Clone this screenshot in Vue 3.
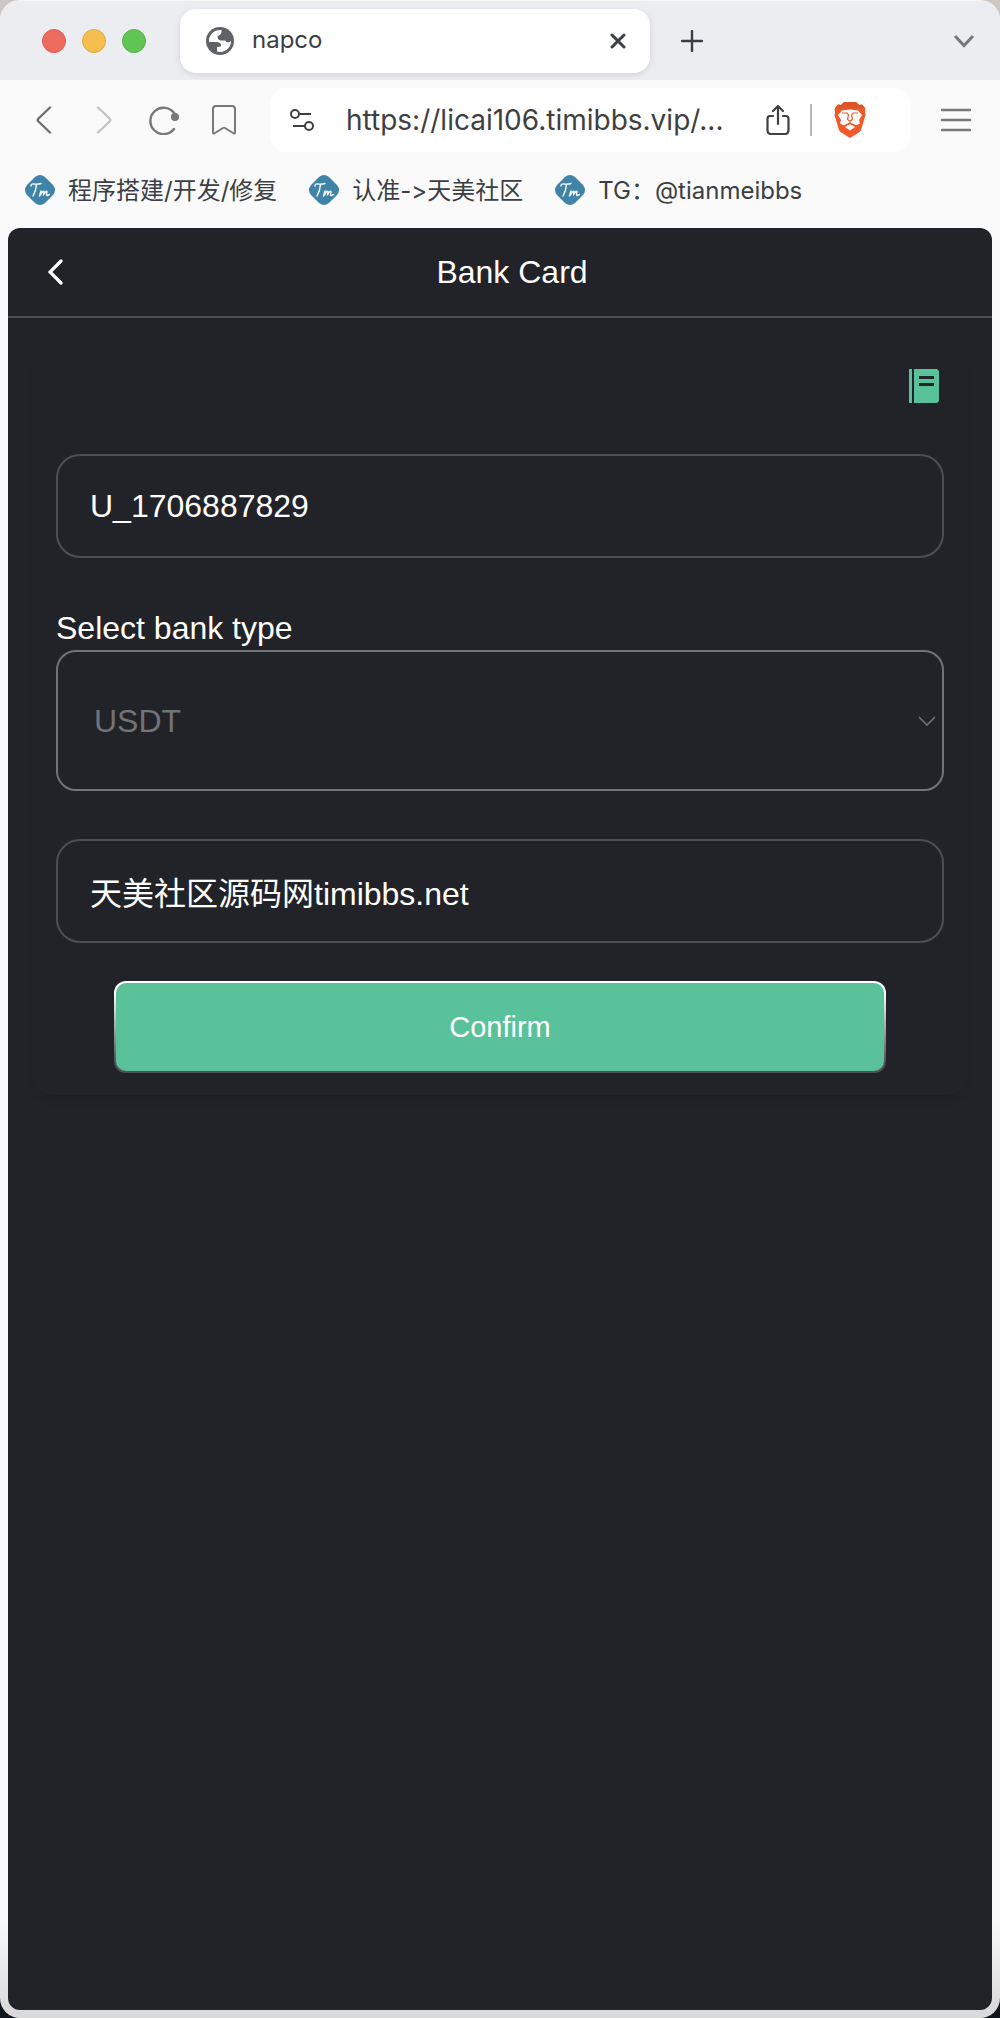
<script setup>
import { ref } from 'vue'

const url = ref('https://licai106.timibbs.vip/...')
const bookmarks = ['程序搭建/开发/修复', '认准->天美社区', 'TG：@tianmeibbs']
const account = ref('U_1706887829')
const bankType = ref('USDT')
const address = ref('天美社区源码网timibbs.net')
</script>

<template>
  <div class="desktop">
    <div class="window">
      <header class="tabstrip">
        <div class="lights">
          <button class="light red" aria-label="Close window"></button>
          <button class="light yellow" aria-label="Minimize window"></button>
          <button class="light green" aria-label="Zoom window"></button>
        </div>
        <div class="tab">
          <svg class="globe" width="28" height="28" viewBox="0 0 28 28">
            <circle cx="14" cy="14" r="14" fill="#5f6368" />
            <path d="M15.500 3A11 11 0 0 0 3 15H10C13 15 15.500 16 15 19.500L11 20V24.600A11 11 0 0 0 25 14C23 16 20 15.500 19 13.500C14 14 11.500 13 11.500 9.500C13 8 16 8 15.500 3Z" fill="#fff" />
          </svg>
          <span class="tab-title">napco</span>
          <button class="icon-btn" aria-label="Close tab">
            <svg width="16" height="16" viewBox="0 0 16 16"><path d="M2 2 14 14M14 2 2 14" stroke="#3b3f43" stroke-width="3" stroke-linecap="round" /></svg>
          </button>
        </div>
        <button class="icon-btn plus" aria-label="New tab">
          <svg width="22" height="22" viewBox="0 0 22 22"><path d="M11 1V21M1 11H21" stroke="#3b3f43" stroke-width="2.4" stroke-linecap="round" /></svg>
        </button>
        <button class="icon-btn more" aria-label="Search tabs">
          <svg width="22" height="14" viewBox="0 0 22 14" fill="none"><path d="M2 2 11 11.500 20 2" stroke="#77777c" stroke-width="3" /></svg>
        </button>
      </header>

      <div class="toolbar">
        <button class="tool" aria-label="Back">
          <svg width="16" height="28" viewBox="0 0 16 28" fill="none"><path d="M14 1.500 2.500 12.500Q1 14 2.500 15.500L14 26.500" stroke="#6e6e73" stroke-width="2.400" stroke-linecap="round" /></svg>
        </button>
        <button class="tool" aria-label="Forward">
          <svg width="16" height="28" viewBox="0 0 16 28" fill="none"><path d="M2 1.500 13.500 12.500Q15 14 13.500 15.500L2 26.500" stroke="#c4c4c7" stroke-width="2.400" stroke-linecap="round" /></svg>
        </button>
        <button class="tool" aria-label="Reload">
          <svg width="30" height="30" viewBox="0 0 30 30" fill="none"><path d="M25.500 8.500A13.200 13.200 0 1 0 25 24" stroke="#77777c" stroke-width="2.400" stroke-linecap="round" /><circle cx="26" cy="12" r="4" fill="#77777c" /></svg>
        </button>
        <button class="tool" aria-label="Bookmark this page">
          <svg width="24" height="30" viewBox="0 0 24 30" fill="none"><path d="M4 1H20Q23 1 23 4V27Q23 29.500 21 28L13 23Q12 22.300 11 23L3 28Q1 29.500 1 27V4Q1 1 4 1Z" stroke="#77777c" stroke-width="2" /></svg>
        </button>
        <div class="address">
          <svg width="24" height="24" viewBox="0 0 24 24" fill="none" stroke="#3f3f42" stroke-width="2"><circle cx="5" cy="6" r="4" /><path d="M9 6H21M3 18H15" /><circle cx="19" cy="18" r="4" /></svg>
          <input v-model="url" class="url" type="text" aria-label="Address" />
          <button class="icon-btn" aria-label="Share">
            <svg width="24" height="32" viewBox="0 0 24 32" fill="none" stroke="#3f3f42" stroke-width="2.200" stroke-linecap="round" stroke-linejoin="round"><path d="M7 12H4Q1.500 12 1.500 15V26Q1.500 30 5 30H19Q22.500 30 22.500 26V15Q22.500 12 20 12H17M12 20V2M7 7 12 2 17 7" /></svg>
          </button>
          <i class="divider"></i>
          <button class="icon-btn" aria-label="Brave Shields">
            <svg width="32" height="36" viewBox="0 0 32 36">
              <path d="M10 0H22L25 3L28 2.500L31.500 7L31 10L31.500 13L27 28Q26 30 24 31L16 36L8 31Q6 30 5 28L.5 13L1 10L.5 7L4 2.500L7 3Z" fill="#f1592a" />
              <path d="M10 0H22L25 3L28 2.500L31 6L25 6.500H7L1 6L4 2.500L7 3Z" fill="#dd5426" />
              <path d="M8 8.500 16 7.500 24 8.500 28 13 25 18 26 21.500 22 23.500 16 20.500 10 23.500 6 21.500 7 18 4 13Z" fill="#fff" />
              <path d="M16 22 21 25 16 28.500 11 25Z" fill="#fff" />
              <path d="M8 11 13 11 14.500 13 13.500 17.500 16 19 18.500 17.500 17.500 13 19 11 24 11M16 19V22M9 24.500 16 21.200 23 24.500" fill="none" stroke="#f1592a" stroke-width="1.200" />
            </svg>
          </button>
        </div>
        <button class="tool menu" aria-label="Menu">
          <svg width="30" height="24" viewBox="0 0 30 24"><path d="M1 2H29M1 12H29M1 22H29" stroke="#77777c" stroke-width="2.400" stroke-linecap="round" /></svg>
        </button>
      </div>

      <nav class="bookmarks" aria-label="Bookmarks">
        <a v-for="name in bookmarks" :key="name" href="#" class="bookmark">
          <svg width="30" height="30" viewBox="0 0 30 30">
            <path d="M10 2Q15-2 20 2L28 10Q32 15 28 20L20 28Q15 32 10 28L2 20Q-2 15 2 10Z" fill="#3f83a9" />
            <path d="M6 11Q6 8.500 9 9Q13 9.500 16 8.500M11.500 9.500Q11 16 8 21M14.500 21 16 16 15.500 20Q18 15 19 16.500L18.500 20Q21 15 22 16.500Q21 20 22 20.500L24.500 19.500" fill="none" stroke="#fff" stroke-width="1.400" stroke-linecap="round" stroke-linejoin="round" />
          </svg>
          <span>{{ name }}</span>
        </a>
      </nav>

      <main class="page">
        <div class="page-head">
          <button class="icon-btn back" aria-label="Go back">
            <svg width="16" height="26" viewBox="0 0 16 26" fill="none"><path d="M13 2 2 13 13 24" stroke="#fff" stroke-width="3.200" stroke-linecap="round" /></svg>
          </button>
          <h1>Bank Card</h1>
        </div>

        <form class="card" @submit.prevent>
          <button type="button" class="icon-btn records" aria-label="Records">
            <svg width="30" height="34" viewBox="0 0 30 34"><path d="M0 0H3V34H0ZM5 0H28L30 2V32L28 34H5Z" fill="#5ac29b" /><path d="M10 7H25V10H10ZM10 14H25V17H10Z" fill="#222328" /></svg>
          </button>
          <input v-model="account" class="field" type="text" aria-label="Account name" />
          <label for="bank-type">Select bank type</label>
          <div class="select-wrap">
            <select id="bank-type" v-model="bankType">
              <option>USDT</option>
            </select>
            <svg class="caret" width="18" height="10" viewBox="0 0 18 10" fill="none"><path d="M1 1 9 9 17 1" stroke="#717377" stroke-width="1.600" /></svg>
          </div>
          <input v-model="address" class="field" type="text" aria-label="Address" />
          <button class="confirm" type="submit">Confirm</button>
        </form>
      </main>
    </div>
  </div>
</template>

<style>
body {
  margin: 0;
}
</style>

<style scoped>
* {
  box-sizing: border-box;
}

button,
input,
select {
  margin: 0;
  padding: 0;
  border: 0;
  background: none;
  font: inherit;
  color: inherit;
}

svg {
  display: block;
  flex: none;
}

.desktop {
  min-height: 100vh;
  display: flex;
  background: linear-gradient(#cfc7c3 50%, #10151b 50%);
  font-family: Inter, "Noto Sans CJK SC", sans-serif;
  font-feature-settings: "calt" 0;
}

.window {
  flex: 1;
  min-width: 0;
  display: flex;
  flex-direction: column;
  padding: 0 8px 8px;
  border-top: 1px solid #f4f4f4;
  border-radius: 20px;
  background: linear-gradient(to top, #dadada 8px, #fafafa 100px);
}

.tabstrip {
  display: flex;
  align-items: center;
  height: 79px;
  margin: 0 -8px;
  padding: 0 25px 0 42px;
  border-radius: 20px 20px 0 0;
  background: #ecedf1;
}

.lights {
  display: flex;
  gap: 16px;
  margin-right: 34px;
}

.light {
  width: 24px;
  height: 24px;
  border-radius: 50%;
}

.red {
  border: 1px solid #dc5b51;
  background: #ed6a5f;
}

.yellow {
  border: 1px solid #dca845;
  background: #f5bf4f;
}

.green {
  border: 1px solid #52ae42;
  background: #61c555;
}

.tab {
  display: flex;
  align-items: center;
  flex: 0 1 470px;
  height: 64px;
  padding: 0 24px 0 26px;
  border-radius: 16px;
  background: #fff;
  box-shadow: 0 2px 6px rgba(0, 0, 0, 0.1);
}

.tab-title {
  flex: 1;
  margin-left: 18px;
  padding-bottom: 2px;
  font-size: 24px;
  color: #3b3f43;
}

.icon-btn {
  display: flex;
  align-items: center;
}

.plus {
  margin-left: 31px;
}

.more {
  margin-left: auto;
}

.toolbar {
  display: flex;
  align-items: center;
  height: 80px;
  padding-left: 6px;
}

.tool {
  display: flex;
  justify-content: center;
  width: 60px;
}

.address {
  display: flex;
  align-items: center;
  flex: 1;
  min-width: 0;
  height: 64px;
  margin-left: 16px;
  padding: 0 44px 0 20px;
  border-radius: 16px;
  background: #fff;
}

.url {
  flex: 1;
  min-width: 0;
  margin-left: 32px;
  font-size: 28px;
  color: #3f3f42;
}

.divider {
  width: 2px;
  height: 32px;
  margin: 0 22px 0 20px;
  background: #b9b9bb;
}

.menu {
  margin: 0 6px 0 16px;
}

.bookmarks {
  display: flex;
  gap: 32px;
  height: 68px;
  padding-left: 17px;
}

.bookmark {
  display: flex;
  align-items: center;
  gap: 13px;
  height: 60px;
  font-size: 24px;
  color: #3b3f43;
  text-decoration: none;
  white-space: nowrap;
}

.bookmark span {
  padding-bottom: 4px;
}

.page {
  flex: 1;
  border-radius: 12px;
  background: #222328;
  color: #fff;
  font-family: "Liberation Sans", "Noto Sans CJK SC", sans-serif;
  font-size: 32px;
}

.page-head {
  display: grid;
  grid-template-columns: 80px 1fr 56px;
  align-items: center;
  height: 90px;
  border-bottom: 2px solid #4e4f53;
}

.back {
  padding-left: 40px;
}

h1 {
  margin: 0;
  font-size: 32px;
  font-weight: 400;
  text-align: center;
}

.card {
  display: flex;
  flex-direction: column;
  margin: 32px 24px 0;
  padding: 19px 24px 22px;
  border-radius: 20px;
  box-shadow: 0 8px 10px -4px rgba(0, 0, 0, 0.12);
}

.records {
  align-self: flex-end;
  margin: 0 5px 51px 0;
}

.field {
  width: 100%;
  height: 104px;
  padding: 0 32px;
  border: 2px solid #4e4f53;
  border-radius: 24px;
}

label {
  padding: 52px 0 4px;
  line-height: 36px;
}

.select-wrap {
  position: relative;
  margin-bottom: 48px;
}

select {
  display: block;
  appearance: none;
  width: 100%;
  height: 141px;
  padding: 0 36px;
  border: 2px solid #717377;
  border-radius: 20px;
  color: #717377;
}

.caret {
  position: absolute;
  right: 8px;
  top: calc(50% - 5px);
  pointer-events: none;
}

.confirm {
  height: 92px;
  margin: 38px 58px 0;
  border: 2px solid transparent;
  border-radius: 12px;
  background:
    linear-gradient(#5ac29b, #5ac29b) padding-box,
    linear-gradient(#fff 12%, #505257 88%) border-box;
  font-size: 29px;
}
</style>
